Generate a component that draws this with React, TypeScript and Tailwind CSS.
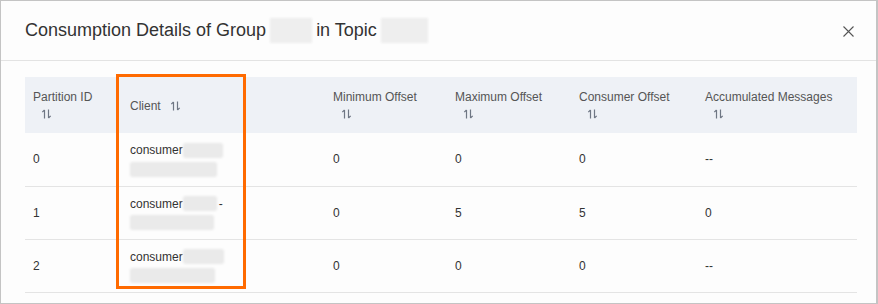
import React from 'react';

const columns = [
  { label: 'Partition ID', width: 97, wrap: true },
  { label: 'Client', width: 203, wrap: false },
  { label: 'Minimum Offset', width: 122, wrap: true },
  { label: 'Maximum Offset', width: 124, wrap: true },
  { label: 'Consumer Offset', width: 126, wrap: true },
  { label: 'Accumulated Messages', width: 160, wrap: true },
];

const rows = [
  { id: '0', first: 40, second: 87, dash: false, min: '0', max: '0', consumer: '0', acc: '--' },
  { id: '1', first: 34, second: 84, dash: true, min: '0', max: '5', consumer: '5', acc: '0' },
  { id: '2', first: 41, second: 85, dash: false, min: '0', max: '0', consumer: '0', acc: '--' },
];

const SortIcon = () => (
  <svg width="11" height="10" viewBox="0 0 11 10" fill="none" stroke="#6f7784" strokeWidth="1.2">
    <path d="M3.5 1v8.5M3.5 1L1.3 3.2" />
    <path d="M7.5 0.5V9M7.5 9l2.2-2.2" />
  </svg>
);

const Blur = ({ w, h }: { w: number; h: number }) => (
  <span
    className="inline-block align-middle bg-[#eaeaea] blur-[1px] rounded-[2px]"
    style={{ width: w, height: h }}
  />
);

const App: React.FC = () => {
  return (
    <div className="w-[878px] h-[304px] bg-[#fdfdfd] border border-[#c4c4c4] border-r-2 overflow-hidden font-['Liberation_Sans',Arial,sans-serif]">
      {/* header */}
      <div className="h-[60px] border-b border-[#e3e3e3] flex items-center justify-between pl-[24px] pr-[22px]">
        <h2 className="text-[18px] text-[#333] flex items-center">
          <span>Consumption Details of Group</span>
          <span className="ml-[4px] mr-[4px] inline-block w-[42px] h-[25px] bg-[#eeeeee] blur-[1px]" />
          <span>in Topic</span>
          <span className="ml-[4px] inline-block w-[47px] h-[25px] bg-[#eeeeee] blur-[1px]" />
        </h2>
        <svg width="11" height="11" viewBox="0 0 11 11" stroke="#555" strokeWidth="1.1" className="mt-[2px]">
          <path d="M0.5 0.5l10 10M10.5 0.5l-10 10" />
        </svg>
      </div>

      {/* table */}
      <div className="relative pt-[16px] pl-[24px]">
        <table className="table-fixed border-collapse w-[832px] text-[12px] text-[#333]">
          <colgroup>
            {columns.map((c) => (
              <col key={c.label} style={{ width: c.width }} />
            ))}
          </colgroup>
          <thead>
            <tr className="bg-[#eef1f6] h-[56px]">
              {columns.map((c) => (
                <th key={c.label} className="px-2 text-left font-normal text-[#555] align-middle leading-[17px]">
                  {c.wrap ? (
                    <>
                      <div>{c.label}</div>
                      <div className="ml-[8px] mt-[1px] h-[14px] flex items-center"><SortIcon /></div>
                    </>
                  ) : (
                    <div className="flex items-center gap-[9px] pt-[2px]">
                      <span>{c.label}</span>
                      <SortIcon />
                    </div>
                  )}
                </th>
              ))}
            </tr>
          </thead>
          <tbody>
            {rows.map((r) => (
              <tr key={r.id} className="h-[53px] border-b border-[#e4e4e4]">
                <td className="px-2 align-middle">{r.id}</td>
                <td className="px-2 align-middle">
                  <div className="flex items-center h-[17px]">
                    <span>consumer</span>
                    <Blur w={r.first} h={15} />
                    {r.dash && <span className="ml-[2px]">-</span>}
                  </div>
                  <div className="mt-[3px] h-[15px] flex">
                    <Blur w={r.second} h={15} />
                  </div>
                </td>
                <td className="px-2 align-middle">{r.min}</td>
                <td className="px-2 align-middle">{r.max}</td>
                <td className="px-2 align-middle">{r.consumer}</td>
                <td className="px-2 align-middle">{r.acc}</td>
              </tr>
            ))}
          </tbody>
        </table>

        {/* highlight */}
        <div className="absolute left-[115px] top-[13px] w-[130px] h-[215px] border-[3px] border-[#ff6a00] pointer-events-none" />
      </div>
    </div>
  );
};

export default App;
